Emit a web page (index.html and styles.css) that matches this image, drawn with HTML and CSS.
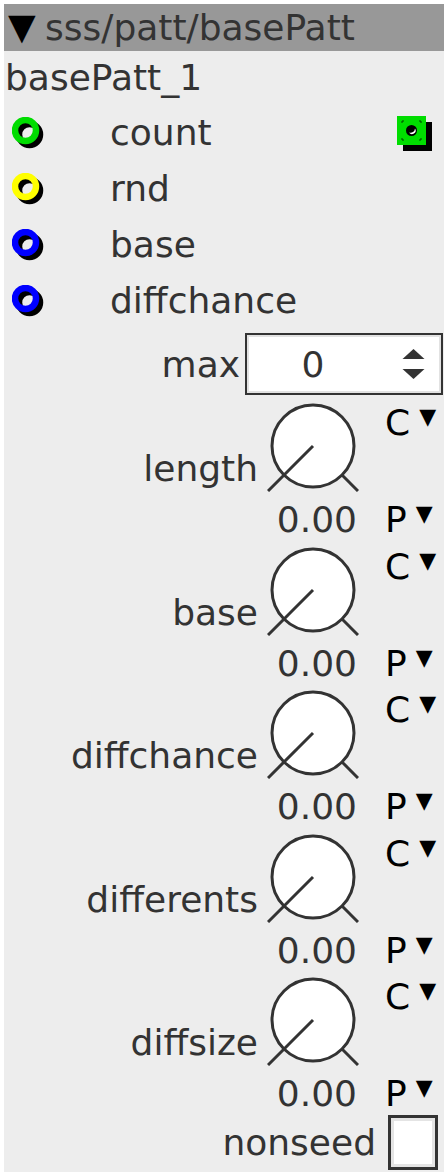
FILE: index.html
```html
<!DOCTYPE html>
<html>
<head>
<meta charset="utf-8">
<link rel="stylesheet" href="styles.css">
</head>
<body>
<div class="panel">
  <div class="header"><span class="tri">▼</span><span class="path">sss/patt/basePatt</span></div>
  <div class="title">basePatt_1</div>

  <div class="port">
    <svg class="ring" width="36" height="36" viewBox="0 0 36 36"><circle cx="17.5" cy="17.5" r="10.5" fill="none" stroke="#000" stroke-width="6.5"/><circle cx="13.5" cy="13.5" r="10.5" fill="none" stroke="#00dd00" stroke-width="6.5"/></svg>
    <span class="pname">count</span>
    <svg class="outsq" width="36" height="36" viewBox="0 0 36 36"><rect x="6" y="6" width="29" height="29" fill="#000"/><rect x="0" y="0" width="29" height="29" fill="#00dd00"/><circle cx="14.5" cy="14.5" r="5.5" fill="#000"/><path d="M12 16.5 a3.5 3.5 0 0 0 6 -4 a4.5 4.5 0 0 1 -6 4z" fill="#fff"/><path d="M5 5h2M5 5v2M24 5h-2M24 5v2M5 24h2M5 24v-2M24 24h-2M24 24v-2" stroke="#004400" stroke-width="1"/></svg>
  </div>
  <div class="port">
    <svg class="ring" width="36" height="36" viewBox="0 0 36 36"><circle cx="17.5" cy="17.5" r="10.5" fill="none" stroke="#000" stroke-width="6.5"/><circle cx="13.5" cy="13.5" r="10.5" fill="none" stroke="#ffff00" stroke-width="6.5"/></svg>
    <span class="pname">rnd</span>
  </div>
  <div class="port">
    <svg class="ring" width="36" height="36" viewBox="0 0 36 36"><circle cx="17.5" cy="17.5" r="10.5" fill="none" stroke="#000" stroke-width="6.5"/><circle cx="13.5" cy="13.5" r="10.5" fill="none" stroke="#0000ff" stroke-width="6.5"/></svg>
    <span class="pname">base</span>
  </div>
  <div class="port">
    <svg class="ring" width="36" height="36" viewBox="0 0 36 36"><circle cx="17.5" cy="17.5" r="10.5" fill="none" stroke="#000" stroke-width="6.5"/><circle cx="13.5" cy="13.5" r="10.5" fill="none" stroke="#0000ff" stroke-width="6.5"/></svg>
    <span class="pname">diffchance</span>
  </div>

  <div class="maxrow">
    <span class="lbl">max</span>
    <div class="spin">
      <span class="spinval">0</span>
      <svg class="arrows" width="26" height="32" viewBox="0 0 26 32"><path d="M1.5 11 L12.5 1 L23.5 11 Z" fill="#333"/><path d="M1.5 21 L12.5 31 L23.5 21 Z" fill="#333"/></svg>
    </div>
  </div>

  <div class="knobblock">
    <span class="klabel">length</span>
    <svg class="knob" width="92" height="92" viewBox="0 0 92 92"><circle cx="46" cy="46" r="41" fill="#fff" stroke="#333" stroke-width="3"/><line x1="46" y1="46" x2="1" y2="91" stroke="#333" stroke-width="3"/><line x1="75" y1="75" x2="91" y2="91" stroke="#333" stroke-width="3"/></svg>
    <span class="cp ctop">C<span class="dd">▼</span></span>
    <span class="kval">0.00</span>
    <span class="cp pbot">P<span class="dd">▼</span></span>
  </div>
  <div class="knobblock">
    <span class="klabel">base</span>
    <svg class="knob" width="92" height="92" viewBox="0 0 92 92"><circle cx="46" cy="46" r="41" fill="#fff" stroke="#333" stroke-width="3"/><line x1="46" y1="46" x2="1" y2="91" stroke="#333" stroke-width="3"/><line x1="75" y1="75" x2="91" y2="91" stroke="#333" stroke-width="3"/></svg>
    <span class="cp ctop">C<span class="dd">▼</span></span>
    <span class="kval">0.00</span>
    <span class="cp pbot">P<span class="dd">▼</span></span>
  </div>
  <div class="knobblock">
    <span class="klabel">diffchance</span>
    <svg class="knob" width="92" height="92" viewBox="0 0 92 92"><circle cx="46" cy="46" r="41" fill="#fff" stroke="#333" stroke-width="3"/><line x1="46" y1="46" x2="1" y2="91" stroke="#333" stroke-width="3"/><line x1="75" y1="75" x2="91" y2="91" stroke="#333" stroke-width="3"/></svg>
    <span class="cp ctop">C<span class="dd">▼</span></span>
    <span class="kval">0.00</span>
    <span class="cp pbot">P<span class="dd">▼</span></span>
  </div>
  <div class="knobblock">
    <span class="klabel">differents</span>
    <svg class="knob" width="92" height="92" viewBox="0 0 92 92"><circle cx="46" cy="46" r="41" fill="#fff" stroke="#333" stroke-width="3"/><line x1="46" y1="46" x2="1" y2="91" stroke="#333" stroke-width="3"/><line x1="75" y1="75" x2="91" y2="91" stroke="#333" stroke-width="3"/></svg>
    <span class="cp ctop">C<span class="dd">▼</span></span>
    <span class="kval">0.00</span>
    <span class="cp pbot">P<span class="dd">▼</span></span>
  </div>
  <div class="knobblock">
    <span class="klabel">diffsize</span>
    <svg class="knob" width="92" height="92" viewBox="0 0 92 92"><circle cx="46" cy="46" r="41" fill="#fff" stroke="#333" stroke-width="3"/><line x1="46" y1="46" x2="1" y2="91" stroke="#333" stroke-width="3"/><line x1="75" y1="75" x2="91" y2="91" stroke="#333" stroke-width="3"/></svg>
    <span class="cp ctop">C<span class="dd">▼</span></span>
    <span class="kval">0.00</span>
    <span class="cp pbot">P<span class="dd">▼</span></span>
  </div>

  <div class="seedrow">
    <span class="lbl">nonseed</span>
    <div class="check"></div>
  </div>
</div>
</body>
</html>
```

FILE: styles.css
```css
html, body {
  margin: 0;
  padding: 0;
  background: #fff;
}
body {
  font-family: "DejaVu Sans", sans-serif;
  font-size: 36px;
  color: #333;
}
.panel {
  margin: 4px;
  width: 440px;
  height: 1168px;
  background: #ededed;
  display: flex;
  flex-direction: column;
}
.header {
  height: 47px;
  background: #989898;
  display: flex;
  align-items: center;
  padding-left: 4px;
  line-height: 1;
}
.tri {
  font-size: 36px;
  color: #000;
  width: 37px;
  margin-top: -2px;
}
.path {
  color: #333;
}
.title {
  height: 53px;
  display: flex;
  align-items: center;
  padding-left: 1px;
}
.port {
  height: 56px;
  display: flex;
  align-items: center;
}
.ring {
  margin-left: 8px;
  margin-top: 6px;
  flex: none;
}
.pname {
  margin-left: 62px;
}
.outsq {
  margin-left: auto;
  margin-right: 11px;
  margin-top: 4px;
}
.maxrow {
  margin-top: 4px;
  height: 64px;
  display: flex;
  align-items: center;
  justify-content: flex-end;
}
.lbl {
  margin-right: 5px;
}
.spin {
  width: 194px;
  height: 58px;
  border: 2px solid #333;
  box-shadow: inset 0 0 0 2px #e2e2e2;
  background: #fff;
  margin-right: 1px;
  display: flex;
  align-items: center;
}
.spinval {
  width: 132px;
  text-align: center;
  color: #333;
}
.arrows {
  margin-left: 22px;
}
.knobblock {
  height: 143.5px;
  display: grid;
  grid-template-columns: 1fr 92px 85px;
  grid-template-rows: 98px 1fr;
}
.klabel {
  grid-column: 1;
  grid-row: 1;
  justify-self: end;
  align-self: end;
  padding-right: 9px;
  margin-bottom: 5px;
}
.knob {
  grid-column: 2;
  grid-row: 1;
  margin-top: 4px;
}
.cp {
  grid-column: 3;
  color: #000;
  padding-left: 26px;
  font-size: 36px;
  display: flex;
  align-items: baseline;
}
.ctop {
  grid-row: 1;
  align-self: start;
  margin-top: 6px;
}
.pbot {
  grid-row: 2;
  align-self: center;
  margin-top: 5px;
}
.dd {
  font-size: 22px;
  margin-left: 9px;
  position: relative;
  top: -11px;
}
.kval {
  grid-column: 1 / 3;
  grid-row: 2;
  justify-self: end;
  align-self: center;
  margin-right: 2px;
  margin-top: 5px;
}
.seedrow {
  flex: 1;
  display: flex;
  align-items: center;
  justify-content: flex-end;
}
.check {
  width: 44px;
  height: 49px;
  border: 3px solid #333;
  box-shadow: inset 0 0 0 3px #e4e4e4;
  background: #fff;
  margin-right: 6px;
  margin-left: 7px;
}
```
